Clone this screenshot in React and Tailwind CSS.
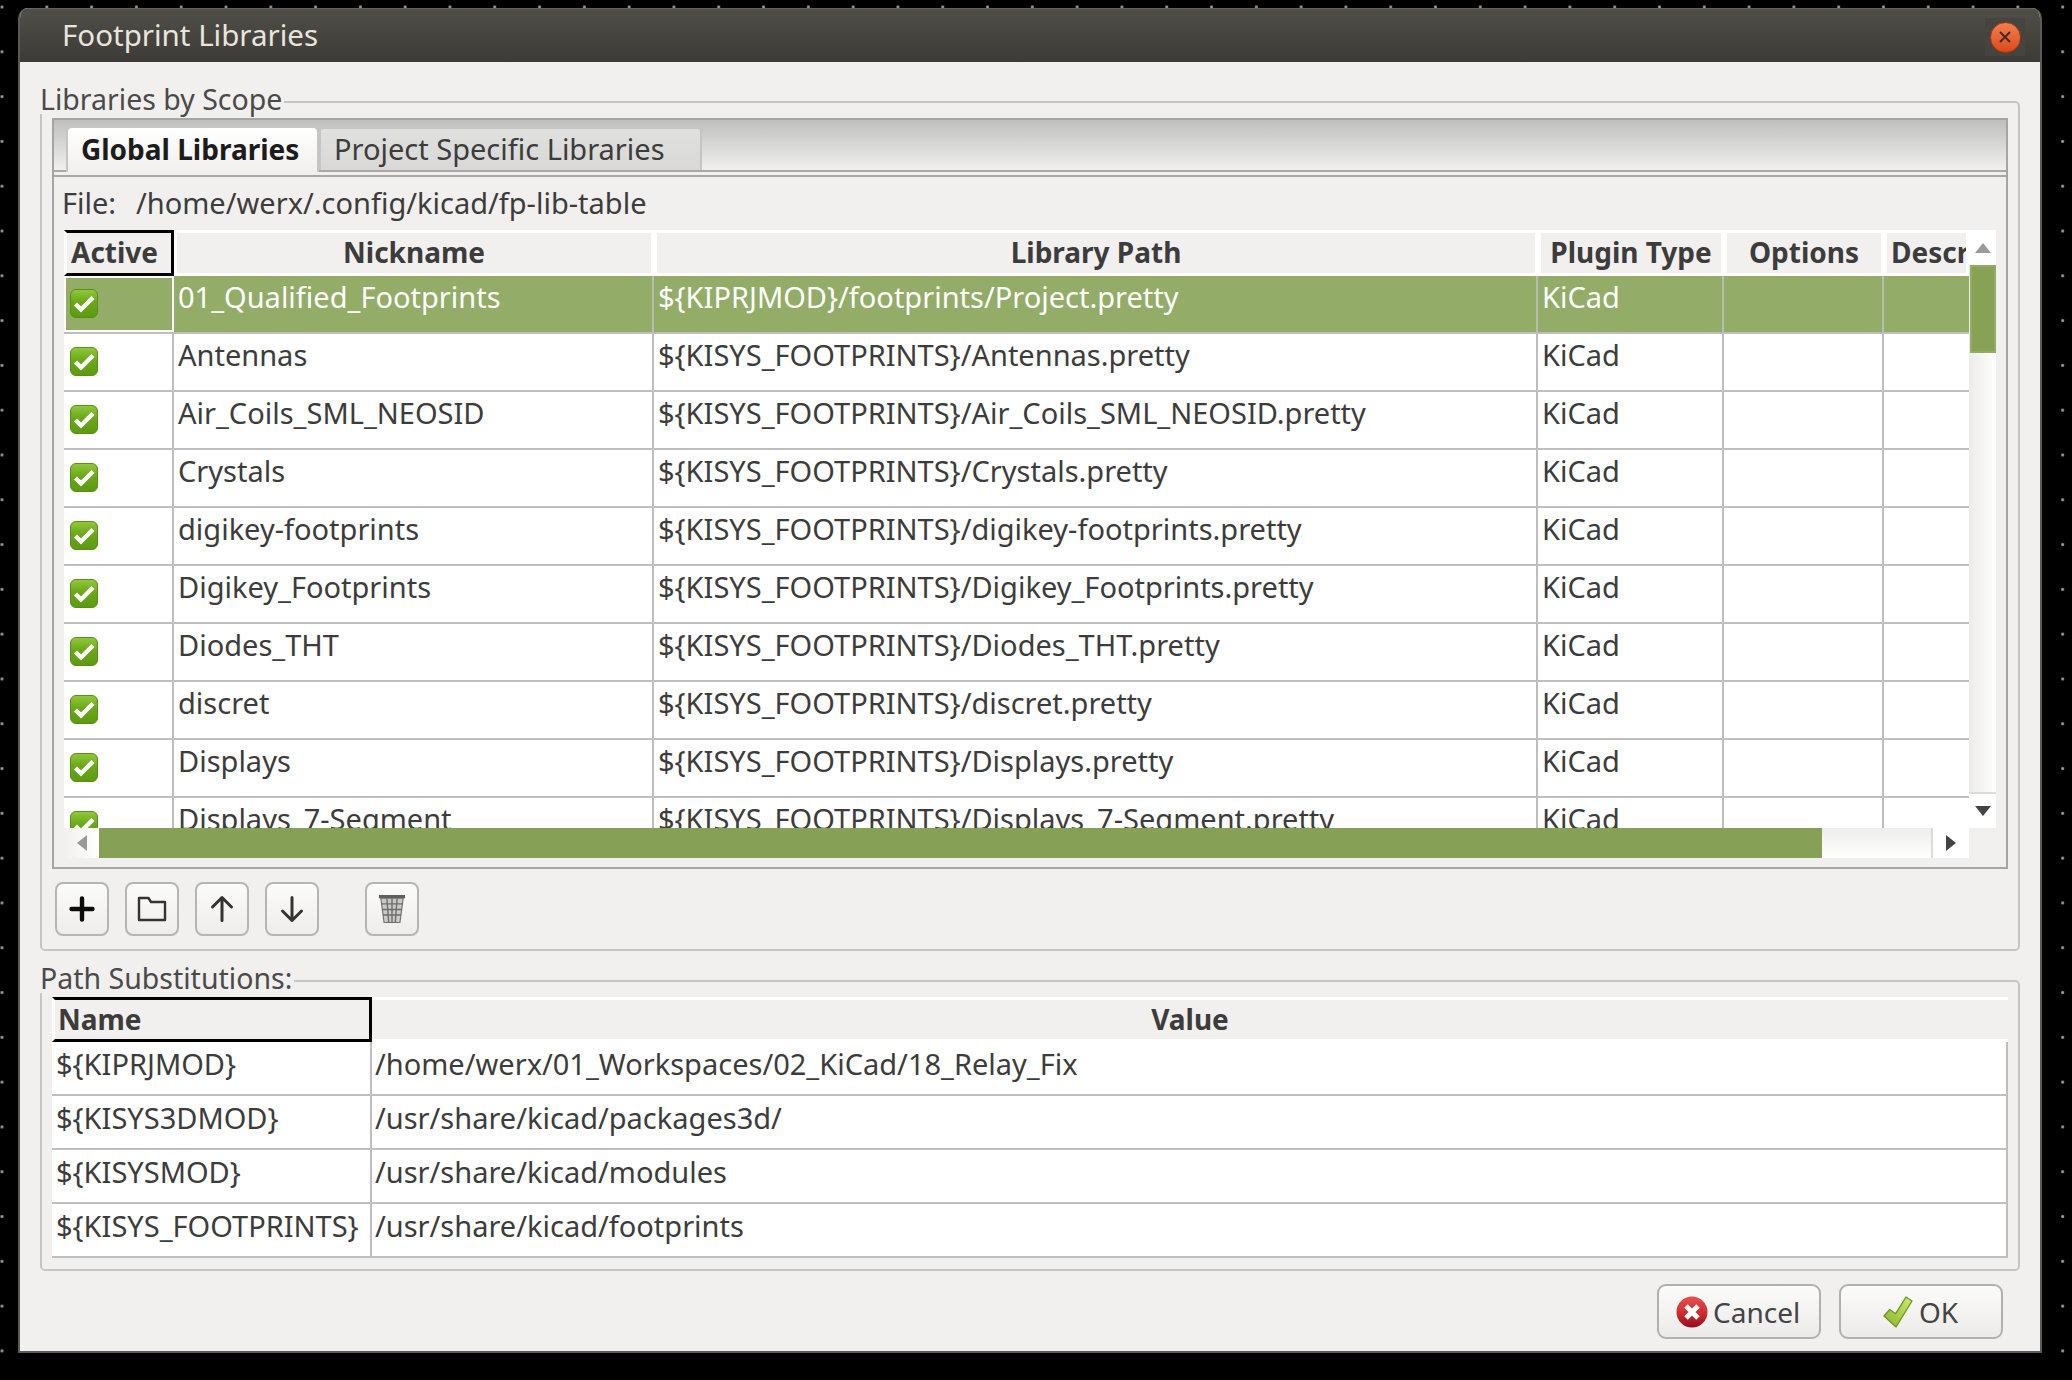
const uiFont = "font-['Noto_Sans',sans-serif]";

const libs = [
  ["01_Qualified_Footprints", "${KIPRJMOD}/footprints/Project.pretty"],
  ["Antennas", "${KISYS_FOOTPRINTS}/Antennas.pretty"],
  ["Air_Coils_SML_NEOSID", "${KISYS_FOOTPRINTS}/Air_Coils_SML_NEOSID.pretty"],
  ["Crystals", "${KISYS_FOOTPRINTS}/Crystals.pretty"],
  ["digikey-footprints", "${KISYS_FOOTPRINTS}/digikey-footprints.pretty"],
  ["Digikey_Footprints", "${KISYS_FOOTPRINTS}/Digikey_Footprints.pretty"],
  ["Diodes_THT", "${KISYS_FOOTPRINTS}/Diodes_THT.pretty"],
  ["discret", "${KISYS_FOOTPRINTS}/discret.pretty"],
  ["Displays", "${KISYS_FOOTPRINTS}/Displays.pretty"],
  ["Displays_7-Segment", "${KISYS_FOOTPRINTS}/Displays_7-Segment.pretty"],
];

const subs = [
  ["${KIPRJMOD}", "/home/werx/01_Workspaces/02_KiCad/18_Relay_Fix"],
  ["${KISYS3DMOD}", "/usr/share/kicad/packages3d/"],
  ["${KISYSMOD}", "/usr/share/kicad/modules"],
  ["${KISYS_FOOTPRINTS}", "/usr/share/kicad/footprints"],
];

const libCols = "grid grid-cols-[110px_480px_884px_186px_160px_85px]";

function CheckBox() {
  return (
    <svg viewBox="0 0 28 29" className="w-7 h-[29px] block">
      <defs>
        <linearGradient id="cb" x1="0" y1="0" x2="0" y2="1">
          <stop offset="0" stopColor="#93c83c" />
          <stop offset="0.45" stopColor="#6ba81a" />
          <stop offset="1" stopColor="#5c9a10" />
        </linearGradient>
      </defs>
      <rect x="0.5" y="0.5" width="27" height="28" rx="5.5" fill="url(#cb)" stroke="#5a8f14" />
      <path d="M5.5 15l5.5 5.5L23 8.5" fill="none" stroke="#fff" strokeWidth="4.4" strokeLinejoin="miter" />
    </svg>
  );
}

function LibRow({ row, selected }) {
  const sep = selected ? "border-[#b9bdb0]" : "border-[#bebebe]";
  const cell = `border-r-2 ${sep} pl-[4px] leading-[41px] truncate`;
  return (
    <div className={`${libCols} h-[58px] shrink-0 border-b-2 border-[#bebebe] ${selected ? "bg-[#93ac68] text-white" : "bg-white text-[#3c3c3c]"}`}>
      <div className={selected ? "border-2 border-white pl-[4px] pt-[11px]" : "border-r-2 border-[#bebebe] pl-[6px] pt-[13px]"}>
        <CheckBox />
      </div>
      <div className={cell}>{row[0]}</div>
      <div className={cell}>{row[1]}</div>
      <div className={cell}>KiCad</div>
      <div className={`border-r-2 ${sep}`} />
      <div />
    </div>
  );
}

function HeadCell({ children, left, focus }) {
  return (
    <div className={`h-[46px] border-[3px] pb-[2px] flex items-center font-bold text-[28px] ${focus ? "border-t-black border-r-black border-b-black border-l-white" : "border-white"} bg-[#f1f0ee] ${left ? "justify-start pl-[4px]" : "justify-center"} overflow-hidden whitespace-nowrap`}>
      {children}
    </div>
  );
}

function Arrow({ dir, color }) {
  const d = { up: "M0 10L8 0l8 10z", down: "M0 0l8 10 8-10z", left: "M10 0L0 8l10 8z", right: "M0 0l10 8-10 8z" }[dir];
  const box = dir === "up" || dir === "down" ? "0 0 16 10" : "0 0 10 16";
  const size = dir === "up" || dir === "down" ? "w-4 h-[10px]" : "w-[10px] h-4";
  return (
    <svg viewBox={box} className={size}>
      <path d={d} fill={color} />
    </svg>
  );
}

function ToolButton({ children, className = "" }) {
  return (
    <button className={`w-[54px] h-[54px] rounded-[8px] border-2 border-[#b5b5b2] bg-gradient-to-b from-[#fbfbfa] to-[#eeedeb] flex items-center justify-center ${className}`}>
      {children}
    </button>
  );
}

function GroupBox({ label, className, children }) {
  return (
    <div className={`relative border-2 border-[#c6c5c0] rounded-[5px] ${className}`}>
      <div className="absolute -left-[2px] -top-[22px] h-[33px] leading-[36px] pr-[2px] bg-[#f1f0ee] text-[#4a4a4a] text-[28.5px] whitespace-nowrap">
        {label}
      </div>
      {children}
    </div>
  );
}

function DlgButton({ icon, label, className = "" }) {
  return (
    <button className={`w-[164px] h-[55px] rounded-[9px] border-2 border-[#b0b0ad] bg-gradient-to-b from-[#fbfbfa] to-[#ecebe9] flex items-center text-[#444] text-[28px] ${className}`}>
      {icon}
      {label}
    </button>
  );
}

export default function App() {
  return (
    <div className={`w-[2072px] h-[1380px] overflow-hidden bg-black bg-[radial-gradient(circle,#9a9a9a_1.2px,transparent_1.8px)] bg-[size:44.8px_44.8px] bg-[position:-20.4px_-15.4px] pt-2 pl-[18px] ${uiFont}`}>
      <div className="w-[2024px] h-[1345px] flex flex-col rounded-t-[10px] bg-[#f1f0ee] border-x-2 border-b-2 border-[#5a5955] overflow-hidden text-[29px] text-[#3c3c3c]">
        <div className="h-[54px] -mx-[2px] shrink-0 flex items-center justify-between pl-[44px] pr-[17px] bg-gradient-to-b from-[#504e48] to-[#3c3b37] border-t border-[#65635c]">
          <span className="text-[#e9e5dd] text-[29.5px] -mt-[1px]">Footprint Libraries</span>
          <div className="w-10 h-[38px] mt-[3px] flex items-center justify-center bg-[#45443f]">
            <div className="w-[31px] h-[31px] rounded-full bg-gradient-to-b from-[#f07f50] to-[#dd4814] border border-[#a83a12] flex items-center justify-center">
              <svg viewBox="0 0 14 14" className="w-[14px] h-[14px]">
                <path d="M2 2l10 10M12 2L2 12" stroke="#4a2a1c" strokeWidth="2" />
              </svg>
            </div>
          </div>
        </div>

        <div className="flex-1 flex flex-col pl-5 pr-5 pt-[39px]">
          <GroupBox label="Libraries by Scope" className="h-[850px] shrink-0 pl-[10px] pr-[10px] pt-[15px]">
            <div className="h-[751px] border-2 border-[#a5a5a2] flex flex-col">
              <div className="h-[52px] shrink-0 flex pl-[12px] bg-gradient-to-b from-[#bfbfbf] to-[#f0f0ee] border-b-2 border-[#a8a8a6] items-end">
                <div className="w-[253px] h-[46px] -mb-[2px] pb-[2px] rounded-t-[6px] border-x-2 border-t-2 border-[#c6c5c2] bg-gradient-to-b from-white to-[#f1f0ee] font-bold text-[28px] text-[#1c1c1c] pl-[13px] flex items-center whitespace-nowrap">
                  Global Libraries
                </div>
                <div className="w-[383px] h-[43px] pb-[2px] rounded-t-[4px] border-x-2 border-t-2 border-[#c6c5c2] bg-gradient-to-b from-[#e0e0de] to-[#d8d8d6] pl-[13px] flex items-center whitespace-nowrap">
                  Project Specific Libraries
                </div>
              </div>
              <div className="h-[5px] shrink-0 border-b-2 border-[#a8a8a6]" />
              <div className="h-[53px] shrink-0 flex items-center pl-[8px] pb-[2px] whitespace-nowrap">
                <span className="w-[74px]">File:</span>
                <span>/home/werx/.config/kicad/fp-lib-table</span>
              </div>

              <div className="flex h-[628px] shrink-0 pl-[10px]">
                <div className="flex flex-col w-[1905px] shrink-0 min-h-0">
                  <div className={`${libCols} shrink-0`}>
                    <HeadCell left focus>Active</HeadCell>
                    <HeadCell>Nickname</HeadCell>
                    <HeadCell>Library Path</HeadCell>
                    <HeadCell>Plugin Type</HeadCell>
                    <HeadCell>Options</HeadCell>
                    <HeadCell left>Description</HeadCell>
                  </div>
                  <div className="h-[552px] shrink-0 overflow-hidden">
                    {libs.map((r, i) => (
                      <LibRow key={r[0]} row={r} selected={i === 0} />
                    ))}
                  </div>
                  <div className="h-[30px] shrink-0 flex bg-gradient-to-b from-[#ededeb] to-white">
                    <div className="w-[35px] shrink-0 flex items-center justify-center bg-gradient-to-r from-[#f1f0ee] to-white">
                      <Arrow dir="left" color="#9a9a96" />
                    </div>
                    <div className="w-[1723px] shrink-0 bg-[#86a055]" />
                    <div className="flex-1 border-r-2 border-[#dcdcda]" />
                    <div className="w-[36px] shrink-0 bg-white flex items-center justify-center">
                      <Arrow dir="right" color="#444" />
                    </div>
                  </div>
                </div>
                <div className="w-[27px] shrink-0 h-[598px] flex flex-col bg-gradient-to-r from-[#ecebe9] to-white">
                  <div className="h-[35px] bg-white flex items-center justify-center">
                    <Arrow dir="up" color="#9a9a96" />
                  </div>
                  <div className="h-[88px] ml-[1px] bg-[#87a155] border-2 border-[#92ac68]" />
                  <div className="flex-1 border-b-2 border-[#dcdcda]" />
                  <div className="h-[34px] bg-white flex items-center justify-center">
                    <Arrow dir="down" color="#444" />
                  </div>
                </div>
              </div>
            </div>

            <div className="flex items-center mt-[13px] pl-[3px]">
              <ToolButton>
                <svg viewBox="0 0 30 30" className="w-[30px] h-[30px]">
                  <path d="M15 4.5v21M4.5 15h21" stroke="#0c0c0c" strokeWidth="4.4" strokeLinecap="round" />
                </svg>
              </ToolButton>
              <ToolButton className="ml-4">
                <svg viewBox="0 0 30 30" className="w-[30px] h-[30px]">
                  <path d="M2 8V4h9.5l2.5 4h14v18H2z" fill="none" stroke="#333" strokeWidth="2.4" strokeLinejoin="round" />
                </svg>
              </ToolButton>
              <ToolButton className="ml-4">
                <svg viewBox="0 0 30 30" className="w-[30px] h-[30px]">
                  <path d="M15 3.5v23M5.5 13L15 3.5l9.5 9.5" fill="none" stroke="#333" strokeWidth="3" strokeLinecap="round" strokeLinejoin="round" />
                </svg>
              </ToolButton>
              <ToolButton className="ml-4">
                <svg viewBox="0 0 30 30" className="w-[30px] h-[30px]">
                  <path d="M15 3.5v23M5.5 17L15 26.5l9.5-9.5" fill="none" stroke="#333" strokeWidth="3" strokeLinecap="round" strokeLinejoin="round" />
                </svg>
              </ToolButton>
              <ToolButton className="ml-[46px]">
                <svg viewBox="0 0 30 32" className="w-[28px] h-[30px]">
                  <path d="M1 1h28v3.5H1z" fill="#5f5f5f" />
                  <path d="M3 4.5l3.5 26h17l3.5-26z" fill="#c9c9c7" stroke="#6e6e6e" strokeWidth="1.2" />
                  <path d="M9.5 4.5l2 26M15 4.5v26M20.5 4.5l-2 26M3.8 10.5h22.4M4.6 16.5h20.8M5.4 22.5h19.2" stroke="#6e6e6e" strokeWidth="1.5" />
                </svg>
              </ToolButton>
            </div>
          </GroupBox>

          <GroupBox label="Path Substitutions:" className="h-[291px] shrink-0 mt-[29px] pl-[10px] pr-[10px] pt-[15px]">
            <div className="grid grid-cols-[320px_1fr] grid-rows-[45px] text-[28px] leading-[34px] font-bold">
              <div className="border-[3px] border-t-black border-r-black border-b-black border-l-white bg-[#f1f0ee] flex items-center pl-[3px] pb-[2px]">
                Name
              </div>
              <div className="border-y-[3px] border-white bg-[#f1f0ee] flex items-center justify-center pb-[2px]">
                Value
              </div>
            </div>
            {subs.map((r) => (
              <div key={r[0]} className="grid grid-cols-[320px_1fr] h-[54px] bg-white border-b-2 border-r-2 border-[#bebebe]">
                <div className="border-r-2 border-[#bebebe] pl-[4px] whitespace-nowrap">{r[0]}</div>
                <div className="pl-[3px] whitespace-nowrap">{r[1]}</div>
              </div>
            ))}
          </GroupBox>

          <div className="flex justify-end gap-[18px] mt-[13px] pr-[17px]">
            <DlgButton
              label="Cancel"
              className="pl-[17px]"
              icon={
                <svg viewBox="0 0 32 32" className="w-8 h-8 mr-[5px]">
                  <defs>
                    <linearGradient id="cx" x1="0" y1="0" x2="0" y2="1">
                      <stop offset="0" stopColor="#e8504f" />
                      <stop offset="0.6" stopColor="#c9282d" />
                      <stop offset="1" stopColor="#8f1022" />
                    </linearGradient>
                  </defs>
                  <circle cx="16" cy="16" r="15.5" fill="url(#cx)" />
                  <path d="M10 10l12 12M22 10L10 22" stroke="#fff" strokeWidth="5" />
                </svg>
              }
            />
            <DlgButton
              label="OK"
              className="pl-[42px]"
              icon={
                <svg viewBox="0 0 30 32" className="w-[30px] h-8 mr-[6px]">
                  <defs>
                    <linearGradient id="okg" x1="1" y1="0" x2="0" y2="1">
                      <stop offset="0" stopColor="#d4e86c" />
                      <stop offset="1" stopColor="#86b52e" />
                    </linearGradient>
                  </defs>
                  <path d="M1 20l5.7-6.5 6 4.2L23 1l6 4-16 26z" fill="url(#okg)" stroke="#6c9a24" strokeWidth="1.4" strokeLinejoin="round" />
                </svg>
              }
            />
          </div>
        </div>
      </div>
    </div>
  );
}
